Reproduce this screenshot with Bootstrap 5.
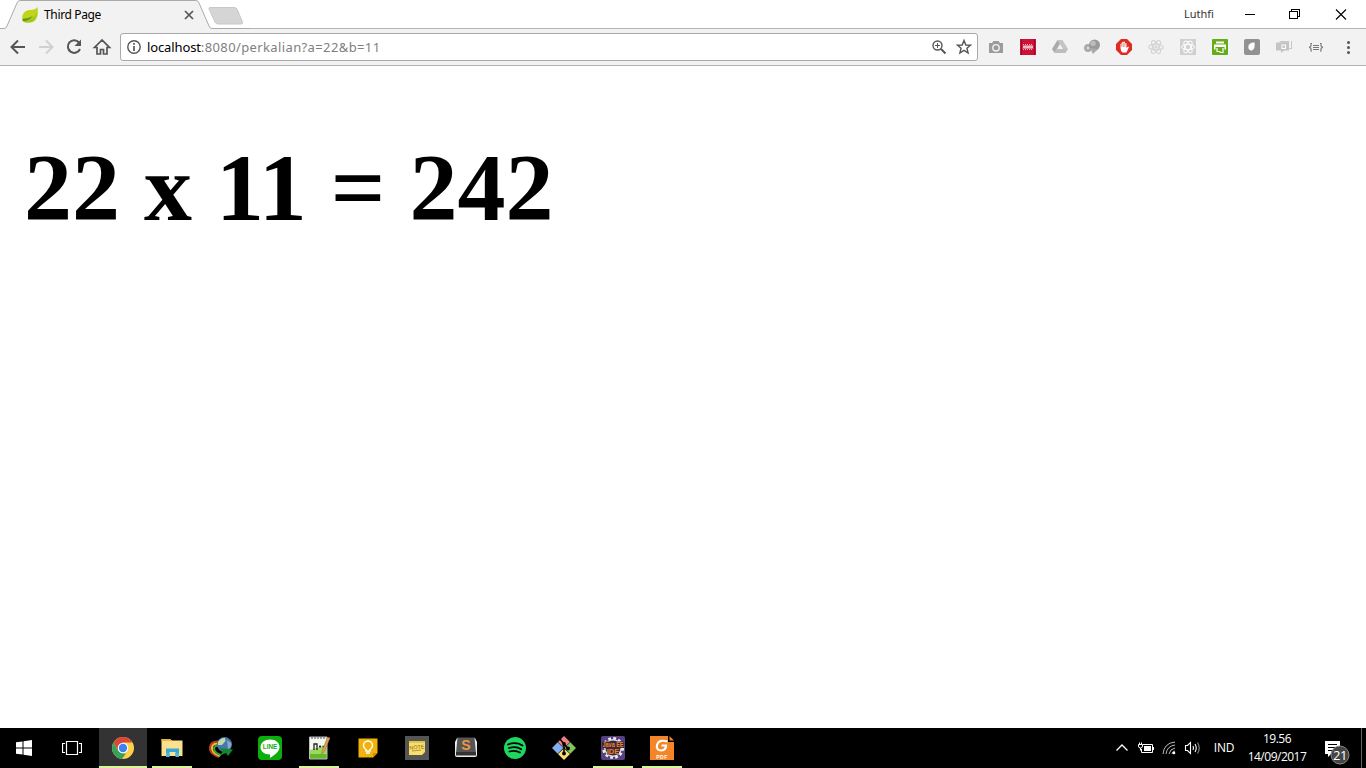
<!DOCTYPE html>
<html lang="id">
<head>
<meta charset="utf-8">
<title>Third Page</title>
<link rel="stylesheet" href="https://cdn.jsdelivr.net/npm/bootstrap@5.3.0/dist/css/bootstrap.min.css">
<style>
body{width:1366px;height:768px;font-family:"Open Sans","Noto Sans",sans-serif;font-size:12px;line-height:16px;color:#000;background:#fff}
svg{display:block;flex:none}
.titlebar{height:28px}
.tabshape{left:0;top:0}
.tabrow{height:29px;width:250px;padding-left:22px}
.tabtitle{margin-left:6px;width:139px;letter-spacing:-.35px;font-family:"Noto Sans",sans-serif}
.username{font-size:11px;font-family:"Noto Sans",sans-serif;color:#333;width:51px}
.winbtn{width:45.5px}
.toolbar{height:38px;background:#f2f2f2;border-top:1px solid #b5b5b5;border-bottom:1px solid #b3b3b3;padding-left:8px}
.navicon{width:28px}
.omnibox{width:858px;height:28px;border:1px solid #a9a9a9;border-radius:3px;padding:0 4px 0 5px}
.url{font-size:13px;letter-spacing:.38px;color:#808080;margin-left:5px;font-family:"Noto Sans",sans-serif}
.url b{font-weight:400;color:#000;letter-spacing:-.12px}
.extbar{margin-left:2px}
.ext{width:32px}
.result{font:bold 96px/96px "Liberation Serif",serif;margin:0;padding:74px 24px 0;white-space:nowrap}
.taskbar{height:40px;background:#000;color:#fff}
.sysbtn{width:48px;height:40px}
.app{width:48px;height:40px;margin-right:1px}
.app.open::after{content:"";position:absolute;bottom:0;left:4px;right:4px;height:2px;background:#d9f59b}
.app.current{background:#333}
.app.current::after{left:0;right:0}
.clock{font-size:12px;line-height:18px;width:70px;letter-spacing:-.5px;margin-left:3px}
.lang{width:30px;letter-spacing:-.2px;margin-left:7px}
.showdesk{height:40px;width:5px;border-left:1px solid #666}
</style>
</head>
<body class="d-flex flex-column overflow-hidden">
<header>
  <div class="titlebar d-flex justify-content-between position-relative">
    <svg class="tabshape position-absolute" width="250" height="29" viewBox="0 0 250 29">
      <path d="M0 28.5H4Q6 28.5 7 26L17 3Q18.200 .5 20 .5H196Q198 .5 199 3L209 26Q210 28.500 212 28.500V29H0Z" fill="#f2f2f2"/>
      <path d="M0 28.500H4Q6 28.500 7 26L17 3Q18.200 .5 20 .5H196Q198 .5 199 3L209 26Q210 28.500 212 28.500H250" fill="none" stroke="#aaa"/>
      <path d="M210 7.500H234Q236 7.500 237 9L242.500 22Q243 24 241 24H218Q216 24 215 22L209 9Q208.500 7.500 210 7.500Z" fill="#d5d5d5" stroke="#c8c8c8"/>
    </svg>
    <div class="tabrow d-flex align-items-center position-relative">
      <svg width="16" height="16" viewBox="0 0 16 16"><path d="M15.500 0C16.500 6 16 15 8 15.500Q3 16 .5 14Q-1 7 4 4C8 2 13 4 15.500 0Z" fill="#bfd51a"/><path d="M1 14Q12 13 15 5Q15 15 6 15.500Q2 15.500 1 14Z" fill="#a5c61a"/><path d="M.5 12Q6 12 11 9Q7 14 1 14Z" fill="#5a9326"/></svg>
      <span class="tabtitle">Third Page</span>
      <svg width="12" height="10" viewBox="0 0 12 10"><path d="M2 1L10 9M10 1L2 9" stroke="#555" stroke-width="1.700"/></svg>
    </div>
    <div class="d-flex align-items-center h-100">
      <span class="username">Luthfi</span>
      <svg width="32" height="26" viewBox="0 0 32 26"><path d="M10 13.500H20" stroke="#000"/></svg>
      <svg width="46" height="26" viewBox="0 0 46 26"><path d="M22.500 10.500H30.500V17.500H22.500ZM24.500 10V8.500H32.500V15.500H31" fill="none" stroke="#000" shape-rendering="crispEdges"/></svg>
      <svg width="45" height="26" viewBox="0 0 45 26"><path d="M23 8.500L33 18.500M33 8.500L23 18.500" stroke="#000" stroke-width="1.100"/></svg>
      <span class="px-1"></span>
    </div>
  </div>
  <nav class="toolbar d-flex align-items-center">
    <div class="navicon"><svg width="20" height="20" viewBox="0 0 20 20"><path d="M17 10H4M10 3.500L3.500 10L10 16.500" fill="none" stroke="#555" stroke-width="2"/></svg></div>
    <div class="navicon"><svg width="20" height="20" viewBox="0 0 20 20"><path d="M3 10H16M10 3.500L16.500 10L10 16.500" fill="none" stroke="#d0d0d0" stroke-width="2"/></svg></div>
    <div class="navicon"><svg width="20" height="20" viewBox="0 0 20 20"><path d="M15 5.500A6.300 6.300 0 1 0 16 12" fill="none" stroke="#555" stroke-width="2"/><path d="M17 2.500V9H10.500Z" fill="#555"/></svg></div>
    <div class="navicon"><svg width="20" height="20" viewBox="0 0 20 20"><path d="M10 3L2.500 10.500H5V17H8.500V12.500H11.500V17H15V10.500H17.500Z" fill="none" stroke="#555" stroke-width="1.700"/></svg></div>
    <div class="omnibox bg-white d-flex align-items-center">
      <svg width="16" height="16" viewBox="0 0 16 16"><circle cx="8" cy="8" r="6.200" fill="none" stroke="#555" stroke-width="1.400"/><path d="M8 4V5.700M8 7V12" stroke="#555" stroke-width="1.700"/></svg>
      <span class="url"><b>localhost</b>:8080/perkalian?a=22&amp;b=11</span>
      <svg class="ms-auto" width="16" height="16" viewBox="0 0 16 16"><circle cx="6.500" cy="6.500" r="4.500" fill="none" stroke="#555" stroke-width="1.400"/><path d="M10 10L14.500 14.500" stroke="#555" stroke-width="2"/><path d="M4 6.500H9M6.500 4V9" stroke="#555"/></svg>
      <svg class="ms-2" width="18" height="18" viewBox="0 0 18 18"><path d="M9 2.500L10.800 7L15.500 7.200L11.900 10.200L13.100 15L9 12.400L4.900 15L6.100 10.200L2.500 7.200L7.200 7Z" fill="none" stroke="#555" stroke-width="1.400"/></svg>
    </div>
    <div class="extbar d-flex align-items-center">
      <div class="ext d-flex justify-content-center"><svg width="16" height="16" viewBox="0 0 16 16"><path d="M1 4H4L5.500 2H10.500L12 4H15V14H1Z" fill="#9b9b9b"/><circle cx="8" cy="8.800" r="3.900" fill="#f2f2f2"/><circle cx="8" cy="8.800" r="2.500" fill="#9b9b9b"/></svg></div>
      <div class="ext d-flex justify-content-center"><svg width="16" height="16" viewBox="0 0 16 16"><path d="M0 0H16V16H0Z" fill="#cd1238"/><path d="M1.500 0V16M14.500 0V16" stroke="#7f0c22" stroke-width=".8"/><path d="M3 5.500H13M3 10.500H13" stroke="#f3a9b6" stroke-width="1" stroke-dasharray="1 1"/><path d="M3 6.500L4.250 9.500L5.500 6.500L6.750 9.500L8 6.500L9.250 9.500L10.500 6.500L11.750 9.500L13 6.500M3 9.500L4.250 6.500L5.500 9.500L6.750 6.500L8 9.500L9.250 6.500L10.500 9.500L11.750 6.500L13 9.500" stroke="#fff" stroke-width=".6" fill="none"/></svg></div>
      <div class="ext d-flex justify-content-center"><svg width="16" height="16" viewBox="0 0 16 16"><path d="M5.500 1H10.500L16 10H11Z" fill="#c4c4c4"/><path d="M5.500 1L0 10L2.500 14L8 5Z" fill="#aaa"/><path d="M5 10H16L13.500 14H2.500Z" fill="#bcbcbc"/></svg></div>
      <div class="ext d-flex justify-content-center"><svg width="16" height="16" viewBox="0 0 16 16"><circle cx="4" cy="9" r="4" fill="#aaa"/><circle cx="10.500" cy="6" r="5.500" fill="#999"/><path d="M6 9L9 15L14 10Z" fill="#aaa"/><circle cx="9" cy="4.500" r="2.800" fill="#bbb"/><circle cx="4" cy="9" r="1.300" fill="#ddd"/></svg></div>
      <div class="ext d-flex justify-content-center"><svg width="16" height="16" viewBox="0 0 16 16"><path d="M5 0H11L16 5V11L11 16H5L0 11V5Z" fill="#df2b23"/><path d="M4.500 9V5Q5 4 5.800 5V3.500Q6.500 2.500 7.300 3.500V3Q8.100 2 8.900 3V4.500Q9.700 3.500 10.500 4.500V9L12 7.500Q13.500 7.500 12.500 9L10.500 13.500H6.500Q4.500 12 4.500 9Z" fill="#fff"/><path d="M5.800 5V8M7.300 4V8M8.900 4V8" stroke="#df2b23" stroke-width=".5"/></svg></div>
      <div class="ext d-flex justify-content-center"><svg width="16" height="16" viewBox="0 0 16 16" fill="none" stroke="#d4d4d4" stroke-width="1.200"><ellipse cx="8" cy="8" rx="7.300" ry="2.900"/><ellipse cx="8" cy="8" rx="7.300" ry="2.900" transform="rotate(60 8 8)"/><ellipse cx="8" cy="8" rx="7.300" ry="2.900" transform="rotate(120 8 8)"/><circle cx="8" cy="8" r="1"/></svg></div>
      <div class="ext d-flex justify-content-center"><svg width="16" height="16" viewBox="0 0 16 16" fill="none" stroke="#fff" stroke-width="1"><path d="M0 0H16V16H0Z" fill="#d0d0d0" stroke="none"/><ellipse cx="8" cy="8" rx="6.500" ry="2.700"/><ellipse cx="8" cy="8" rx="6.500" ry="2.700" transform="rotate(60 8 8)"/><ellipse cx="8" cy="8" rx="6.500" ry="2.700" transform="rotate(120 8 8)"/></svg></div>
      <div class="ext d-flex justify-content-center"><svg width="16" height="16" viewBox="0 0 16 16"><rect width="16" height="16" rx="1" fill="#65ad17"/><path d="M4 2.500H12V4.500H4ZM2 5.500H14V10.500H12.500V8H3.500V10.500H2Z" fill="#fff"/><path d="M5 9V12.500H7.500L8.500 13.500H11V9" fill="none" stroke="#fff" stroke-width="1.200"/></svg></div>
      <div class="ext d-flex justify-content-center"><svg width="16" height="16" viewBox="0 0 16 16"><rect width="16" height="16" rx="2" fill="#929292"/><path d="M4.500 9.500C3.500 5 7 3.500 10.500 3.500Q11.500 9.500 8 11.500Q5.500 12 4.500 9.500Z" fill="#fff"/></svg></div>
      <div class="ext d-flex justify-content-center"><svg width="18" height="16" viewBox="0 0 18 16"><path d="M4 2H14V9H16V2H17V10H14.500Z" fill="#c8c8c8"/><path d="M1 3.500H14V11.500H9L6 14V11.500H1Z" fill="#c4c4c4"/><rect x="7" y="6" width="3.500" height="3.500" fill="none" stroke="#fff"/></svg></div>
      <div class="ext d-flex justify-content-center"><svg width="16" height="16" viewBox="0 0 16 16" fill="none" stroke="#777" stroke-width="1.100"><path d="M4 4.500H3V7L1.500 8.200L3 9.500V12H4M12 4.500H13V7L14.500 8.200L13 9.500V12H12M5 6.500H11M5 8.500H11M5 10.500H11"/></svg></div>
      <div class="ext d-flex justify-content-center"><svg width="16" height="16" viewBox="0 0 16 16" fill="#555"><circle cx="8.500" cy="3.500" r="1.500"/><circle cx="8.500" cy="8.500" r="1.500"/><circle cx="8.500" cy="13.500" r="1.500"/></svg></div>
    </div>
  </nav>
</header>
<main class="flex-grow-1"><h1 class="result">22 x 11 = 242</h1></main>
<footer class="taskbar d-flex align-items-center">
  <div class="sysbtn d-flex align-items-center justify-content-center"><svg width="16" height="16" viewBox="0 0 16 16"><path d="M0 2.300L6.500 1.400V7.500H0ZM7.500 1.200L16 0V7.500H7.500ZM0 8.500H6.500V14.600L0 13.700ZM7.500 8.500H16V16L7.500 14.800Z" fill="#fff"/></svg></div>
  <div class="sysbtn d-flex align-items-center justify-content-center me-1" style="width:47px"><svg width="20" height="16" viewBox="0 0 20 16"><path d="M4.500 1.500H15.500V14.500H4.500ZM3 3.500H.5V12.500H3M17 3.500H19.500V12.500H17" fill="none" stroke="#fff" stroke-width="1.200"/></svg></div>
  <div class="app current open position-relative d-flex align-items-center justify-content-center"><svg width="24" height="24" viewBox="0 0 24 24"><circle cx="12" cy="12" r="11" fill="#fdd14b"/><path d="M2.500 6.500A11 11 0 0 1 21.500 6.500H12L7.200 14.700Z" fill="#d9473b"/><path d="M2.500 6.500L7.200 14.700L12 17.500H15L11 23A11 11 0 0 1 2.500 6.500Z" fill="#37a05a"/><circle cx="12" cy="12" r="5.300" fill="#fff"/><circle cx="12" cy="12" r="4.200" fill="#3f82ee"/></svg></div>
  <div class="app open position-relative d-flex align-items-center justify-content-center"><svg width="24" height="24" viewBox="0 0 24 24"><path d="M1.500 3H10L12 4.500H22.500V20H1.500Z" fill="#fbe08d"/><path d="M1.500 3H10L11.500 5H1.500Z" fill="#e8b83a"/><path d="M6 20V12.500H19V20H15.500V16H9.500V20Z" fill="#35a9d5"/><path d="M6 17H9.500V21H6ZM15.500 17H19V21H15.500Z" fill="#4bb8e2"/></svg></div>
  <div class="app d-flex align-items-center justify-content-center"><svg width="24" height="24" viewBox="0 0 24 24"><path d="M10 21Q0 18 1 11Q2 5 10 5.500" fill="none" stroke="#c53922" stroke-width="2"/><path d="M11 20Q2 17 3 11Q4 7 10 7.500" fill="none" stroke="#edc22e" stroke-width="2"/><path d="M12 19Q5 17 5 12Q6 9 10 9.500" fill="none" stroke="#389c45" stroke-width="2"/><circle cx="15.500" cy="8.500" r="7.500" fill="#4677ae"/><path d="M9 6Q12 1.500 16 2L16.500 5L13 9L9 9Z" fill="#c3d9a8"/><path d="M18 4L22 7Q23 12 19 13Z" fill="#8ca9ca"/><path d="M10 12L24 13.500L19 20L17 17L11 19.500L14 15Z" fill="#12872b"/></svg></div>
  <div class="app d-flex align-items-center justify-content-center"><svg width="24" height="24" viewBox="0 0 24 24"><rect width="24" height="24" rx="4" fill="#0bae0b"/><path d="M12 3.500C18 3.500 21.500 7 21.500 11C21.500 15.500 17 18.500 12 22V18.500C6 18.500 2.500 15 2.500 11C2.500 6.500 7 3.500 12 3.500Z" fill="#fff"/><text x="12" y="13.300" text-anchor="middle" font-size="6.300" font-weight="700" font-family="Liberation Sans,sans-serif" fill="#0bae0b">LINE</text></svg></div>
  <div class="app open position-relative d-flex align-items-center justify-content-center"><svg width="24" height="24" viewBox="0 0 24 24"><path d="M2.500 1H20V23H2.500Z" fill="#f5f8f2"/><path d="M3 14L20 9V23H3Z" fill="#9bda60"/><path d="M3 18H20V23H3Z" fill="#61b828"/><path d="M2.500 1H20V23H2.500Z" fill="none" stroke="#bbb"/><path d="M5 1V3M8 1V3M11 1V3M14 1V3M17 1V3" stroke="#555"/><path d="M7 14V8H10V14M12 10.500H14M15.500 10.500H17.500M13 9.500V11.500" fill="none" stroke="#222" stroke-width="1.300"/><path d="M20.500 1L23 2L17 16L14.500 18L15 15Z" fill="#dea251" stroke="#9c6737" stroke-width=".5"/></svg></div>
  <div class="app d-flex align-items-center justify-content-center"><svg width="24" height="24" viewBox="0 0 24 24"><path d="M2.500 2.500H21.500V17L17 21.500H2.500Z" fill="#f2b20d"/><path d="M21.500 17H17V21.500Z" fill="#d58b00"/><path d="M10 15V13.500Q7.500 12 7.500 9.500A4.500 4.500 0 0 1 16.500 9.500Q16.500 12 14 13.500V15ZM10 17H14" fill="none" stroke="#fff" stroke-width="1.400"/></svg></div>
  <div class="app d-flex align-items-center justify-content-center"><svg width="24" height="24" viewBox="0 0 24 24"><path d="M0 0H24V24H0Z" fill="#555"/><path d="M4 5H20V16L17 19H4Z" fill="#f8df69"/><path d="M4 5H20V7H4Z" fill="#e4c54c"/><text x="12" y="13" text-anchor="middle" font-size="5.500" fill="#8b5b20" font-family="Liberation Sans,sans-serif" transform="rotate(-5 12 12)">NOTE</text><path d="M7 15L16 14" stroke="#a77827" stroke-width=".8"/></svg></div>
  <div class="app d-flex align-items-center justify-content-center"><svg width="24" height="24" viewBox="0 0 24 24"><path d="M3 2H21L23 6V19Q23 21 21 21H3Q1 21 1 19V6Z" fill="#eee"/><path d="M3.500 1.500H20.500L22 17H2Z" fill="#555"/><path d="M2 16H22V19.500H2Z" fill="#333"/><text x="12" y="13.500" text-anchor="middle" font-size="14" font-weight="700" font-family="Liberation Sans,sans-serif" fill="#ec9742">S</text></svg></div>
  <div class="app d-flex align-items-center justify-content-center"><svg width="24" height="24" viewBox="0 0 24 24"><circle cx="12" cy="12" r="11" fill="#1ed760"/><path d="M5 8.500Q13 5.500 19.500 9.500M6 12Q13 9.800 18.200 13.200M6.500 15.500Q12.500 13.800 17 16.500" fill="none" stroke="#000" stroke-width="1.800" stroke-linecap="round"/></svg></div>
  <div class="app d-flex align-items-center justify-content-center"><svg width="24" height="24" viewBox="0 0 24 24"><path d="M12 0L18 6L12 12L6 6Z" fill="#f0807e"/><path d="M18.300 6.300L24 12L18.300 17.700L12.600 12Z" fill="#81c55a"/><path d="M12 12.500L18 18L12 24L6 18Z" fill="#fbdc78"/><path d="M5.700 6.300L11.400 12L5.700 17.700L0 12Z" fill="#80b0f1"/><path d="M8 3L12 8V18M12 8L16 12.500" stroke="#000" stroke-width="1.500" fill="none"/><circle cx="12" cy="8" r="1.900"/><circle cx="12" cy="17.500" r="1.900"/><circle cx="16" cy="12.500" r="1.900"/></svg></div>
  <div class="app open position-relative d-flex align-items-center justify-content-center"><svg width="24" height="24" viewBox="0 0 24 24"><rect width="24" height="24" rx="2" fill="#57427f"/><circle cx="12" cy="12" r="9.500" fill="none" stroke="#eee" stroke-width="3" stroke-dasharray="2.700 2.270"/><circle cx="12" cy="12" r="8.200" fill="#302c3b" stroke="#ddd" stroke-width="1.500"/><path d="M1 5.500H23V12H18V18.500H6V12H1Z" fill="#382a3f"/><text x="1.500" y="11.300" font-size="7" font-weight="700" textLength="21" lengthAdjust="spacingAndGlyphs" font-family="Liberation Sans,sans-serif" fill="#f08226">Java EE</text><text x="12" y="18" text-anchor="middle" font-size="7.500" font-weight="700" font-family="Liberation Sans,sans-serif" fill="#f08226">IDE</text></svg></div>
  <div class="app open position-relative d-flex align-items-center justify-content-center"><svg width="24" height="24" viewBox="0 0 24 24"><path d="M0 0H18V6H24V24H0Z" fill="#f48528"/><path d="M19.500 0L24 4.500H19.500Z" fill="#f48528"/><path d="M17.500 5.500Q8.500 3 7 9Q6 14.500 11.500 14.500Q16 14 16 9.500H11.500" fill="none" stroke="#fff" stroke-width="2.200"/><text x="12" y="22.500" text-anchor="middle" font-size="5" font-weight="700" letter-spacing=".5" font-family="Liberation Sans,sans-serif" fill="#fff">PDF</text></svg></div>
  <div class="ms-auto d-flex align-items-center">
    <svg width="20" height="20" viewBox="0 0 20 20"><path d="M4.500 12.500L10 7L15.500 12.500" fill="none" stroke="#fff" stroke-width="1.300"/></svg>
    <svg class="ms-1" width="18" height="16" viewBox="0 0 18 16" fill="none" stroke="#fff"><path d="M7 4.500H16.500V12.500H5.500V9M17.500 7V10M2.500 4.500H6.500V6Q6.500 8 4.500 8Q2.500 8 2.500 6ZM3.500 2.500V4M5.500 2.500V4M4.500 8V10.500"/><path d="M8 6H15V11H8Z" fill="#fff" stroke="none"/></svg>
    <svg style="margin-left:8px" width="16" height="16" viewBox="0 0 16 16" fill="none"><g stroke="#bbb"><path d="M1 14Q2 3 13 2M4 14Q5 6 13 5M7 14Q8 9 13 8M10 14Q10 11.500 13 11"/></g><circle cx="12" cy="13" r="1.300" fill="#fff"/></svg>
    <svg style="margin-left:6px" width="18" height="16" viewBox="0 0 18 16" fill="none" stroke="#fff" stroke-width="1.100"><path d="M1.500 5.500H3.500L6.500 2.500V13.500L3.500 10.500H1.500ZM9 6Q10 8 9 10M11 4Q13.500 8 11 12"/><path d="M13.500 2.500Q17 8 13.500 13.500" stroke="#888"/></svg>
    <span class="lang text-center">IND</span>
    <div class="clock text-center">19.56<br>14/09/2017</div>
    <svg class="ms-2" width="41" height="40" viewBox="0 0 41 40"><path d="M5 13H20V26H11L8 29V26H5Z" fill="#fff"/><path d="M8 16.500H17M8 19.500H17M8 22.500H14" stroke="#000"/><circle cx="20" cy="27" r="9" fill="#454545" stroke="#888"/><text x="20" y="31.500" text-anchor="middle" font-size="13" fill="#fff" letter-spacing="-.5">21</text></svg>
    <span class="showdesk"></span>
  </div>
</footer>
<script src="https://cdn.jsdelivr.net/npm/bootstrap@5.3.0/dist/js/bootstrap.bundle.min.js"></script>
</body>
</html>
